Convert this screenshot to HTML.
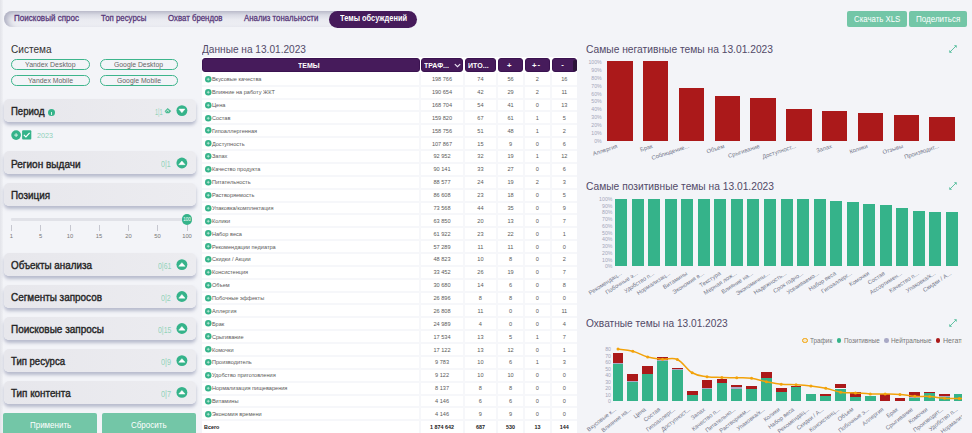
<!DOCTYPE html><html><head><meta charset="utf-8"><style>
*{box-sizing:border-box;margin:0;padding:0}
html,body{width:972px;height:433px;overflow:hidden;background:#f3f4f8;font-family:"Liberation Sans",sans-serif;position:relative}
.ab{position:absolute}
.t{position:absolute;white-space:nowrap;line-height:1}
.panel{position:absolute;left:3.6px;width:192.3px;height:23px;border-radius:5px;background:linear-gradient(90deg,#e7e7ec,#ececf0);box-shadow:0 3px 3.5px rgba(135,140,170,.55)}
.cbtn{position:absolute;width:11px;height:11px;border-radius:50%;background:#35b38a}
.pill{position:absolute;height:10.4px;width:78.6px;border:1.4px solid #3db58c;border-radius:6px}
.gbtn{position:absolute;background:#73c6a7;border-radius:2px}
.hd{position:absolute;top:58.4px;height:14px;background:#461b5b;border-radius:3px;border:0.7px solid #3a1250}
.ic{position:absolute;width:6.5px;height:6.5px;border-radius:50%;background:#35b38a}
.xl{position:absolute;font-size:5.8px;color:#727488;line-height:1;white-space:nowrap;transform-origin:100% 0}
</style></head><body>

<div class="ab" style="left:0;top:0;width:3px;height:433px;background:linear-gradient(90deg,#e2e3e9,#eff0f4)"></div>
<div class="ab" style="left:3.5px;top:10.8px;width:410px;height:16.2px;border-radius:8px;background:linear-gradient(180deg,#bcbdcc 0%,#d9dae4 25%,#eaebf1 55%,#eeeff4 100%);box-shadow:inset 7px 0 6px -4px #a9aabd"></div>
<div class="t" style="transform:scaleX(0.8939);transform-origin:0 0;left:14.00px;top:14.35px;font-size:9px;font-weight:400;color:#573779;-webkit-text-stroke:0.3px #573779;">Поисковый спрос</div>
<div class="t" style="transform:scaleX(0.8701);transform-origin:0 0;left:100.60px;top:14.35px;font-size:9px;font-weight:400;color:#573779;-webkit-text-stroke:0.3px #573779;">Топ ресурсы</div>
<div class="t" style="transform:scaleX(0.8694);transform-origin:0 0;left:167.50px;top:14.35px;font-size:9px;font-weight:400;color:#573779;-webkit-text-stroke:0.3px #573779;">Охват брендов</div>
<div class="t" style="transform:scaleX(0.8689);transform-origin:0 0;left:243.75px;top:14.35px;font-size:9px;font-weight:400;color:#573779;-webkit-text-stroke:0.3px #573779;">Анализ тональности</div>
<div class="ab" style="left:329.4px;top:10.8px;width:87.6px;height:17.2px;border-radius:8.6px;background:#461b5b"></div>
<div class="t" style="transform:scaleX(0.8059);transform-origin:0 0;left:339.50px;top:14.38px;font-size:9.2px;font-weight:700;color:#fff;">Темы обсуждений</div>
<div class="gbtn" style="left:847px;top:10.5px;width:59.75px;height:16.25px"></div>
<div class="t" style="transform:scaleX(0.8884);transform-origin:0 0;left:854.00px;top:15.42px;font-size:8.8px;font-weight:400;color:#fff;">Скачать XLS</div>
<div class="gbtn" style="left:909px;top:10.5px;width:58px;height:16.25px"></div>
<div class="t" style="transform:scaleX(0.9109);transform-origin:0 0;left:916.00px;top:15.42px;font-size:8.8px;font-weight:400;color:#fff;">Поделиться</div>
<div class="t" style="transform:scaleX(0.9337);transform-origin:0 0;left:11.40px;top:44.12px;font-size:10.8px;font-weight:400;color:#333;">Система</div>
<div class="pill" style="left:11.4px;top:59.2px"></div>
<div class="t" style="transform:scaleX(0.9171);transform-origin:0 0;left:25.40px;top:61.34px;font-size:7.6px;font-weight:400;color:#666;">Yandex Desktop</div>
<div class="pill" style="left:99.5px;top:59.2px"></div>
<div class="t" style="transform:scaleX(0.8996);transform-origin:0 0;left:114.30px;top:61.34px;font-size:7.6px;font-weight:400;color:#666;">Google Desktop</div>
<div class="pill" style="left:11.4px;top:75.2px"></div>
<div class="t" style="transform:scaleX(0.9059);transform-origin:0 0;left:28.20px;top:77.34px;font-size:7.6px;font-weight:400;color:#666;">Yandex Mobile</div>
<div class="pill" style="left:99.5px;top:75.2px"></div>
<div class="t" style="transform:scaleX(0.8985);transform-origin:0 0;left:116.80px;top:77.34px;font-size:7.6px;font-weight:400;color:#666;">Google Mobile</div>
<div class="panel" style="top:98.7px"></div>
<div class="t" style="transform:scaleX(0.8845);transform-origin:0 0;left:11.40px;top:106.12px;font-size:10.8px;font-weight:400;color:#262626;-webkit-text-stroke:0.4px #262626;">Период</div>
<svg class="ab" style="left:170px;top:98px" width="25" height="24" viewBox="0 0 25 24"><circle cx="11.9" cy="12.60" r="5.45" fill="#35b38a"/><polygon points="8.90,11.10 14.90,11.10 11.90,14.70" fill="#fff" stroke="#fff" stroke-width="0.5" stroke-linejoin="round"/></svg>
<div class="t" style="transform:scaleX(0.6358);transform-origin:0 0;left:154.80px;top:107.89px;font-size:8.6px;font-weight:400;color:#92d3ba;">1|1</div>
<svg class="ab" style="left:164.4px;top:107.30px" width="8" height="7" viewBox="0 0 8 7"><path d="M0.6 4.3 L3.6 1.0 L7.2 4.1 L5.2 6.2 L2.2 6.2Z" fill="#4dbb94"/><path d="M2.2 4.6 L3.6 3.2 L5 4.5" stroke="#eef6f2" stroke-width="0.9" fill="none"/></svg>
<div class="panel" style="top:151.1px"></div>
<div class="t" style="transform:scaleX(0.9294);transform-origin:0 0;left:11.40px;top:158.52px;font-size:10.8px;font-weight:400;color:#262626;-webkit-text-stroke:0.4px #262626;">Регион выдачи</div>
<svg class="ab" style="left:170px;top:151px" width="25" height="24" viewBox="0 0 25 24"><circle cx="11.9" cy="12.00" r="5.45" fill="#35b38a"/><polygon points="8.75,13.65 15.05,13.65 11.90,10.05" fill="#fff" stroke="#fff" stroke-width="0.5" stroke-linejoin="round"/></svg>
<div class="t" style="transform:scaleX(0.8138);transform-origin:0 0;left:161.40px;top:160.29px;font-size:8.6px;font-weight:400;color:#92d3ba;">0|1</div>
<div class="panel" style="top:183.0px"></div>
<div class="t" style="transform:scaleX(0.9136);transform-origin:0 0;left:11.40px;top:190.42px;font-size:10.8px;font-weight:400;color:#262626;-webkit-text-stroke:0.4px #262626;">Позиция</div>
<div class="panel" style="top:252.7px"></div>
<div class="t" style="transform:scaleX(0.9111);transform-origin:0 0;left:11.40px;top:260.12px;font-size:10.8px;font-weight:400;color:#262626;-webkit-text-stroke:0.4px #262626;">Объекты анализа</div>
<svg class="ab" style="left:170px;top:252px" width="25" height="24" viewBox="0 0 25 24"><circle cx="11.9" cy="12.60" r="5.45" fill="#35b38a"/><polygon points="8.75,14.25 15.05,14.25 11.90,10.65" fill="#fff" stroke="#fff" stroke-width="0.5" stroke-linejoin="round"/></svg>
<div class="t" style="transform:scaleX(0.8023);transform-origin:0 0;left:157.70px;top:261.89px;font-size:8.6px;font-weight:400;color:#92d3ba;">0|61</div>
<div class="panel" style="top:284.6px"></div>
<div class="t" style="transform:scaleX(0.9199);transform-origin:0 0;left:11.40px;top:292.02px;font-size:10.8px;font-weight:400;color:#262626;-webkit-text-stroke:0.4px #262626;">Сегменты запросов</div>
<svg class="ab" style="left:170px;top:284px" width="25" height="24" viewBox="0 0 25 24"><circle cx="11.9" cy="12.50" r="5.45" fill="#35b38a"/><polygon points="8.75,14.15 15.05,14.15 11.90,10.55" fill="#fff" stroke="#fff" stroke-width="0.5" stroke-linejoin="round"/></svg>
<div class="t" style="transform:scaleX(0.8223);transform-origin:0 0;left:161.30px;top:293.79px;font-size:8.6px;font-weight:400;color:#92d3ba;">0|2</div>
<div class="panel" style="top:316.6px"></div>
<div class="t" style="transform:scaleX(0.9252);transform-origin:0 0;left:11.40px;top:324.02px;font-size:10.8px;font-weight:400;color:#262626;-webkit-text-stroke:0.4px #262626;">Поисковые запросы</div>
<svg class="ab" style="left:170px;top:316px" width="25" height="24" viewBox="0 0 25 24"><circle cx="11.9" cy="12.50" r="5.45" fill="#35b38a"/><polygon points="8.75,14.15 15.05,14.15 11.90,10.55" fill="#fff" stroke="#fff" stroke-width="0.5" stroke-linejoin="round"/></svg>
<div class="t" style="transform:scaleX(0.8023);transform-origin:0 0;left:157.70px;top:325.79px;font-size:8.6px;font-weight:400;color:#92d3ba;">0|15</div>
<div class="panel" style="top:348.7px"></div>
<div class="t" style="transform:scaleX(0.8839);transform-origin:0 0;left:11.40px;top:356.12px;font-size:10.8px;font-weight:400;color:#262626;-webkit-text-stroke:0.4px #262626;">Тип ресурса</div>
<svg class="ab" style="left:170px;top:348px" width="25" height="24" viewBox="0 0 25 24"><circle cx="11.9" cy="12.60" r="5.45" fill="#35b38a"/><polygon points="8.75,14.25 15.05,14.25 11.90,10.65" fill="#fff" stroke="#fff" stroke-width="0.5" stroke-linejoin="round"/></svg>
<div class="t" style="transform:scaleX(0.8477);transform-origin:0 0;left:161.00px;top:357.89px;font-size:8.6px;font-weight:400;color:#92d3ba;">0|9</div>
<div class="panel" style="top:380.5px"></div>
<div class="t" style="transform:scaleX(0.9123);transform-origin:0 0;left:11.40px;top:387.92px;font-size:10.8px;font-weight:400;color:#262626;-webkit-text-stroke:0.4px #262626;">Тип контента</div>
<svg class="ab" style="left:170px;top:380px" width="25" height="24" viewBox="0 0 25 24"><circle cx="11.9" cy="12.40" r="5.45" fill="#35b38a"/><polygon points="8.75,14.05 15.05,14.05 11.90,10.45" fill="#fff" stroke="#fff" stroke-width="0.5" stroke-linejoin="round"/></svg>
<div class="t" style="transform:scaleX(0.8477);transform-origin:0 0;left:161.00px;top:389.69px;font-size:8.6px;font-weight:400;color:#92d3ba;">0|7</div>
<div class="ab" style="left:48.1px;top:109.4px;width:7px;height:7px;border-radius:50%;background:#35b38a"></div>
<div class="ab" style="left:51.1px;top:112px;width:1px;height:3px;background:#d8f0e6"></div>
<svg class="ab" style="left:10.5px;top:129.8px" width="22" height="11" viewBox="0 0 22 11"><circle cx="5.1" cy="5.1" r="4.85" fill="#35b38a"/><path d="M3.2 5.1 H7 M5.1 3.2 V7" stroke="#d5f1e6" stroke-width="1"/><rect x="11.1" y="0.2" width="9.2" height="9.4" rx="1" fill="#35b38a"/><path d="M12.8 4.9 L14.9 7 L18.6 2.9" stroke="#fff" stroke-width="1.2" fill="none"/></svg>
<div class="t" style="transform:scaleX(1.0000);transform-origin:0 0;left:37.00px;top:131.98px;font-size:7.2px;font-weight:400;color:#8fd0b8;">2023</div>
<div class="ab" style="left:11.4px;top:218.4px;width:176px;height:2.3px;border-radius:1px;background:#e1e2e8"></div>
<div class="ab" style="left:10.9px;top:224.8px;width:1px;height:6px;background:#c6c7d0"></div>
<div class="t" style="left:-3.60px;width:30px;text-align:center;top:233.97px;font-size:5.8px;font-weight:400;color:#777;">1</div>
<div class="ab" style="left:40.1px;top:224.8px;width:1px;height:6px;background:#c6c7d0"></div>
<div class="t" style="left:25.60px;width:30px;text-align:center;top:233.97px;font-size:5.8px;font-weight:400;color:#777;">5</div>
<div class="ab" style="left:69.5px;top:224.8px;width:1px;height:6px;background:#c6c7d0"></div>
<div class="t" style="left:55.00px;width:30px;text-align:center;top:233.97px;font-size:5.8px;font-weight:400;color:#777;">10</div>
<div class="ab" style="left:98.5px;top:224.8px;width:1px;height:6px;background:#c6c7d0"></div>
<div class="t" style="left:84.00px;width:30px;text-align:center;top:233.97px;font-size:5.8px;font-weight:400;color:#777;">15</div>
<div class="ab" style="left:128.0px;top:224.8px;width:1px;height:6px;background:#c6c7d0"></div>
<div class="t" style="left:113.50px;width:30px;text-align:center;top:233.97px;font-size:5.8px;font-weight:400;color:#777;">20</div>
<div class="ab" style="left:157.0px;top:224.8px;width:1px;height:6px;background:#c6c7d0"></div>
<div class="t" style="left:142.50px;width:30px;text-align:center;top:233.97px;font-size:5.8px;font-weight:400;color:#777;">50</div>
<div class="ab" style="left:186.5px;top:224.8px;width:1px;height:6px;background:#c6c7d0"></div>
<div class="t" style="left:172.00px;width:30px;text-align:center;top:233.97px;font-size:5.8px;font-weight:400;color:#777;">100</div>
<div class="ab" style="left:181.6px;top:214px;width:10.8px;height:10.8px;border-radius:50%;background:#35b38a"></div>
<div class="t" style="left:181.00px;width:12px;text-align:center;top:218.19px;font-size:4.6px;font-weight:400;color:#fff;">100</div>
<div class="gbtn" style="left:3.1px;top:412.8px;width:94px;height:24px"></div>
<div class="t" style="transform:scaleX(0.8857);transform-origin:0 0;left:29.80px;top:421.25px;font-size:9px;font-weight:400;color:#fff;">Применить</div>
<div class="gbtn" style="left:101.9px;top:412.8px;width:94px;height:24px"></div>
<div class="t" style="transform:scaleX(0.8897);transform-origin:0 0;left:130.70px;top:421.25px;font-size:9px;font-weight:400;color:#fff;">Сбросить</div>
<div class="t" style="transform:scaleX(0.9547);transform-origin:0 0;left:201.50px;top:43.99px;font-size:10.6px;font-weight:400;color:#524a68;">Данные на 13.01.2023</div>
<div class="ab" style="left:201.5px;top:56.5px;width:375.8px;height:380px;background:#f6f7fa"></div>
<div class="ab" style="left:201.5px;top:56.5px;width:375.8px;height:16px;background:#fff"></div>
<div class="hd" style="left:202px;width:217.5px"></div>
<div class="hd" style="left:421px;width:42px"></div>
<div class="hd" style="left:464.8px;width:31.19999999999999px"></div>
<div class="hd" style="left:498px;width:25px"></div>
<div class="hd" style="left:525px;width:25px"></div>
<div class="hd" style="left:552px;width:25px"></div>
<div class="t" style="transform:scaleX(0.9027);transform-origin:0 0;left:298.25px;top:61.77px;font-size:7.8px;font-weight:700;color:#fff;">ТЕМЫ</div>
<div class="t" style="transform:scaleX(0.8933);transform-origin:0 0;left:424.00px;top:61.77px;font-size:7.8px;font-weight:700;color:#fff;">ТРАФ...</div>
<svg class="ab" style="left:453.5px;top:63px" width="7" height="5" viewBox="0 0 7 5"><path d="M0.8 1.1 L3.5 3.7 L6.2 1.1" stroke="#efe8f6" stroke-width="1.1" fill="none"/></svg>
<div class="t" style="transform:scaleX(0.9055);transform-origin:0 0;left:467.60px;top:61.77px;font-size:7.8px;font-weight:700;color:#fff;">ИТО...</div>
<div class="t" style="left:499.20px;width:20px;text-align:center;top:61.87px;font-size:7.8px;font-weight:700;color:#fff;">+</div>
<div class="t" style="left:524.20px;width:20px;text-align:center;top:61.87px;font-size:7.8px;font-weight:700;color:#fff;">+</div>
<div class="t" style="left:528.90px;width:20px;text-align:center;top:61.17px;font-size:7.8px;font-weight:700;color:#fff;">-</div>
<div class="t" style="left:552.60px;width:20px;text-align:center;top:61.17px;font-size:7.8px;font-weight:700;color:#fff;">-</div>
<div class="ab" style="left:573.4px;top:59.6px;width:3.2px;height:11.5px;background:#2b1338;border-radius:1.5px"></div>
<div class="ab" style="left:202px;top:72.50px;width:217.20px;height:12.20px;background:#fff"></div>
<div class="ab" style="left:421.2px;top:72.50px;width:41.50px;height:12.20px;background:#fff"></div>
<div class="ab" style="left:464.7px;top:72.50px;width:31.70px;height:12.20px;background:#fff"></div>
<div class="ab" style="left:498.4px;top:72.50px;width:24.90px;height:12.20px;background:#fff"></div>
<div class="ab" style="left:525.3px;top:72.50px;width:24.30px;height:12.20px;background:#fff"></div>
<div class="ab" style="left:551.6px;top:72.50px;width:25.70px;height:12.20px;background:#fff"></div>
<svg class="ab" style="left:204.8px;top:75.95px" width="7" height="7" viewBox="0 0 7 7"><circle cx="3.25" cy="3.25" r="3.25" fill="#35b38a"/><path d="M1.8 3.25 H4.7 M3.25 1.8 V4.7" stroke="#c9eede" stroke-width="0.8"/></svg>
<div class="t" style="left:211.90px;top:77.24px;font-size:5.6px;font-weight:400;color:#5a5a5a;">Вкусовые качества</div>
<div class="t" style="left:422.00px;width:40px;text-align:center;top:77.24px;font-size:5.6px;font-weight:400;color:#5a5a5a;">198 766</div>
<div class="t" style="left:460.40px;width:40px;text-align:center;top:77.24px;font-size:5.6px;font-weight:400;color:#5a5a5a;">74</div>
<div class="t" style="left:490.50px;width:40px;text-align:center;top:77.24px;font-size:5.6px;font-weight:400;color:#5a5a5a;">56</div>
<div class="t" style="left:517.40px;width:40px;text-align:center;top:77.24px;font-size:5.6px;font-weight:400;color:#5a5a5a;">2</div>
<div class="t" style="left:544.30px;width:40px;text-align:center;top:77.24px;font-size:5.6px;font-weight:400;color:#5a5a5a;">16</div>
<div class="ab" style="left:202px;top:86.70px;width:217.20px;height:10.87px;background:#fff"></div>
<div class="ab" style="left:421.2px;top:86.70px;width:41.50px;height:10.87px;background:#fff"></div>
<div class="ab" style="left:464.7px;top:86.70px;width:31.70px;height:10.87px;background:#fff"></div>
<div class="ab" style="left:498.4px;top:86.70px;width:24.90px;height:10.87px;background:#fff"></div>
<div class="ab" style="left:525.3px;top:86.70px;width:24.30px;height:10.87px;background:#fff"></div>
<div class="ab" style="left:551.6px;top:86.70px;width:25.70px;height:10.87px;background:#fff"></div>
<svg class="ab" style="left:204.8px;top:88.82px" width="7" height="7" viewBox="0 0 7 7"><circle cx="3.25" cy="3.25" r="3.25" fill="#35b38a"/><path d="M1.8 3.25 H4.7 M3.25 1.8 V4.7" stroke="#c9eede" stroke-width="0.8"/></svg>
<div class="t" style="left:211.90px;top:90.11px;font-size:5.6px;font-weight:400;color:#5a5a5a;">Влияние на работу ЖКТ</div>
<div class="t" style="left:422.00px;width:40px;text-align:center;top:90.11px;font-size:5.6px;font-weight:400;color:#5a5a5a;">190 654</div>
<div class="t" style="left:460.40px;width:40px;text-align:center;top:90.11px;font-size:5.6px;font-weight:400;color:#5a5a5a;">42</div>
<div class="t" style="left:490.50px;width:40px;text-align:center;top:90.11px;font-size:5.6px;font-weight:400;color:#5a5a5a;">29</div>
<div class="t" style="left:517.40px;width:40px;text-align:center;top:90.11px;font-size:5.6px;font-weight:400;color:#5a5a5a;">2</div>
<div class="t" style="left:544.30px;width:40px;text-align:center;top:90.11px;font-size:5.6px;font-weight:400;color:#5a5a5a;">11</div>
<div class="ab" style="left:202px;top:99.57px;width:217.20px;height:10.87px;background:#fff"></div>
<div class="ab" style="left:421.2px;top:99.57px;width:41.50px;height:10.87px;background:#fff"></div>
<div class="ab" style="left:464.7px;top:99.57px;width:31.70px;height:10.87px;background:#fff"></div>
<div class="ab" style="left:498.4px;top:99.57px;width:24.90px;height:10.87px;background:#fff"></div>
<div class="ab" style="left:525.3px;top:99.57px;width:24.30px;height:10.87px;background:#fff"></div>
<div class="ab" style="left:551.6px;top:99.57px;width:25.70px;height:10.87px;background:#fff"></div>
<svg class="ab" style="left:204.8px;top:101.69px" width="7" height="7" viewBox="0 0 7 7"><circle cx="3.25" cy="3.25" r="3.25" fill="#35b38a"/><path d="M1.8 3.25 H4.7 M3.25 1.8 V4.7" stroke="#c9eede" stroke-width="0.8"/></svg>
<div class="t" style="left:211.90px;top:102.98px;font-size:5.6px;font-weight:400;color:#5a5a5a;">Цена</div>
<div class="t" style="left:422.00px;width:40px;text-align:center;top:102.98px;font-size:5.6px;font-weight:400;color:#5a5a5a;">168 704</div>
<div class="t" style="left:460.40px;width:40px;text-align:center;top:102.98px;font-size:5.6px;font-weight:400;color:#5a5a5a;">54</div>
<div class="t" style="left:490.50px;width:40px;text-align:center;top:102.98px;font-size:5.6px;font-weight:400;color:#5a5a5a;">41</div>
<div class="t" style="left:517.40px;width:40px;text-align:center;top:102.98px;font-size:5.6px;font-weight:400;color:#5a5a5a;">0</div>
<div class="t" style="left:544.30px;width:40px;text-align:center;top:102.98px;font-size:5.6px;font-weight:400;color:#5a5a5a;">13</div>
<div class="ab" style="left:202px;top:112.44px;width:217.20px;height:10.87px;background:#fff"></div>
<div class="ab" style="left:421.2px;top:112.44px;width:41.50px;height:10.87px;background:#fff"></div>
<div class="ab" style="left:464.7px;top:112.44px;width:31.70px;height:10.87px;background:#fff"></div>
<div class="ab" style="left:498.4px;top:112.44px;width:24.90px;height:10.87px;background:#fff"></div>
<div class="ab" style="left:525.3px;top:112.44px;width:24.30px;height:10.87px;background:#fff"></div>
<div class="ab" style="left:551.6px;top:112.44px;width:25.70px;height:10.87px;background:#fff"></div>
<svg class="ab" style="left:204.8px;top:114.56px" width="7" height="7" viewBox="0 0 7 7"><circle cx="3.25" cy="3.25" r="3.25" fill="#35b38a"/><path d="M1.8 3.25 H4.7 M3.25 1.8 V4.7" stroke="#c9eede" stroke-width="0.8"/></svg>
<div class="t" style="left:211.90px;top:115.85px;font-size:5.6px;font-weight:400;color:#5a5a5a;">Состав</div>
<div class="t" style="left:422.00px;width:40px;text-align:center;top:115.85px;font-size:5.6px;font-weight:400;color:#5a5a5a;">159 820</div>
<div class="t" style="left:460.40px;width:40px;text-align:center;top:115.85px;font-size:5.6px;font-weight:400;color:#5a5a5a;">67</div>
<div class="t" style="left:490.50px;width:40px;text-align:center;top:115.85px;font-size:5.6px;font-weight:400;color:#5a5a5a;">61</div>
<div class="t" style="left:517.40px;width:40px;text-align:center;top:115.85px;font-size:5.6px;font-weight:400;color:#5a5a5a;">1</div>
<div class="t" style="left:544.30px;width:40px;text-align:center;top:115.85px;font-size:5.6px;font-weight:400;color:#5a5a5a;">5</div>
<div class="ab" style="left:202px;top:125.31px;width:217.20px;height:10.87px;background:#fff"></div>
<div class="ab" style="left:421.2px;top:125.31px;width:41.50px;height:10.87px;background:#fff"></div>
<div class="ab" style="left:464.7px;top:125.31px;width:31.70px;height:10.87px;background:#fff"></div>
<div class="ab" style="left:498.4px;top:125.31px;width:24.90px;height:10.87px;background:#fff"></div>
<div class="ab" style="left:525.3px;top:125.31px;width:24.30px;height:10.87px;background:#fff"></div>
<div class="ab" style="left:551.6px;top:125.31px;width:25.70px;height:10.87px;background:#fff"></div>
<svg class="ab" style="left:204.8px;top:127.43px" width="7" height="7" viewBox="0 0 7 7"><circle cx="3.25" cy="3.25" r="3.25" fill="#35b38a"/><path d="M1.8 3.25 H4.7 M3.25 1.8 V4.7" stroke="#c9eede" stroke-width="0.8"/></svg>
<div class="t" style="left:211.90px;top:128.72px;font-size:5.6px;font-weight:400;color:#5a5a5a;">Гипоаллергенная</div>
<div class="t" style="left:422.00px;width:40px;text-align:center;top:128.72px;font-size:5.6px;font-weight:400;color:#5a5a5a;">158 756</div>
<div class="t" style="left:460.40px;width:40px;text-align:center;top:128.72px;font-size:5.6px;font-weight:400;color:#5a5a5a;">51</div>
<div class="t" style="left:490.50px;width:40px;text-align:center;top:128.72px;font-size:5.6px;font-weight:400;color:#5a5a5a;">48</div>
<div class="t" style="left:517.40px;width:40px;text-align:center;top:128.72px;font-size:5.6px;font-weight:400;color:#5a5a5a;">1</div>
<div class="t" style="left:544.30px;width:40px;text-align:center;top:128.72px;font-size:5.6px;font-weight:400;color:#5a5a5a;">2</div>
<div class="ab" style="left:202px;top:138.18px;width:217.20px;height:10.87px;background:#fff"></div>
<div class="ab" style="left:421.2px;top:138.18px;width:41.50px;height:10.87px;background:#fff"></div>
<div class="ab" style="left:464.7px;top:138.18px;width:31.70px;height:10.87px;background:#fff"></div>
<div class="ab" style="left:498.4px;top:138.18px;width:24.90px;height:10.87px;background:#fff"></div>
<div class="ab" style="left:525.3px;top:138.18px;width:24.30px;height:10.87px;background:#fff"></div>
<div class="ab" style="left:551.6px;top:138.18px;width:25.70px;height:10.87px;background:#fff"></div>
<svg class="ab" style="left:204.8px;top:140.30px" width="7" height="7" viewBox="0 0 7 7"><circle cx="3.25" cy="3.25" r="3.25" fill="#35b38a"/><path d="M1.8 3.25 H4.7 M3.25 1.8 V4.7" stroke="#c9eede" stroke-width="0.8"/></svg>
<div class="t" style="left:211.90px;top:141.59px;font-size:5.6px;font-weight:400;color:#5a5a5a;">Доступность</div>
<div class="t" style="left:422.00px;width:40px;text-align:center;top:141.59px;font-size:5.6px;font-weight:400;color:#5a5a5a;">107 867</div>
<div class="t" style="left:460.40px;width:40px;text-align:center;top:141.59px;font-size:5.6px;font-weight:400;color:#5a5a5a;">15</div>
<div class="t" style="left:490.50px;width:40px;text-align:center;top:141.59px;font-size:5.6px;font-weight:400;color:#5a5a5a;">9</div>
<div class="t" style="left:517.40px;width:40px;text-align:center;top:141.59px;font-size:5.6px;font-weight:400;color:#5a5a5a;">0</div>
<div class="t" style="left:544.30px;width:40px;text-align:center;top:141.59px;font-size:5.6px;font-weight:400;color:#5a5a5a;">6</div>
<div class="ab" style="left:202px;top:151.05px;width:217.20px;height:10.87px;background:#fff"></div>
<div class="ab" style="left:421.2px;top:151.05px;width:41.50px;height:10.87px;background:#fff"></div>
<div class="ab" style="left:464.7px;top:151.05px;width:31.70px;height:10.87px;background:#fff"></div>
<div class="ab" style="left:498.4px;top:151.05px;width:24.90px;height:10.87px;background:#fff"></div>
<div class="ab" style="left:525.3px;top:151.05px;width:24.30px;height:10.87px;background:#fff"></div>
<div class="ab" style="left:551.6px;top:151.05px;width:25.70px;height:10.87px;background:#fff"></div>
<svg class="ab" style="left:204.8px;top:153.17px" width="7" height="7" viewBox="0 0 7 7"><circle cx="3.25" cy="3.25" r="3.25" fill="#35b38a"/><path d="M1.8 3.25 H4.7 M3.25 1.8 V4.7" stroke="#c9eede" stroke-width="0.8"/></svg>
<div class="t" style="left:211.90px;top:154.46px;font-size:5.6px;font-weight:400;color:#5a5a5a;">Запах</div>
<div class="t" style="left:422.00px;width:40px;text-align:center;top:154.46px;font-size:5.6px;font-weight:400;color:#5a5a5a;">92 952</div>
<div class="t" style="left:460.40px;width:40px;text-align:center;top:154.46px;font-size:5.6px;font-weight:400;color:#5a5a5a;">32</div>
<div class="t" style="left:490.50px;width:40px;text-align:center;top:154.46px;font-size:5.6px;font-weight:400;color:#5a5a5a;">19</div>
<div class="t" style="left:517.40px;width:40px;text-align:center;top:154.46px;font-size:5.6px;font-weight:400;color:#5a5a5a;">1</div>
<div class="t" style="left:544.30px;width:40px;text-align:center;top:154.46px;font-size:5.6px;font-weight:400;color:#5a5a5a;">12</div>
<div class="ab" style="left:202px;top:163.92px;width:217.20px;height:10.87px;background:#fff"></div>
<div class="ab" style="left:421.2px;top:163.92px;width:41.50px;height:10.87px;background:#fff"></div>
<div class="ab" style="left:464.7px;top:163.92px;width:31.70px;height:10.87px;background:#fff"></div>
<div class="ab" style="left:498.4px;top:163.92px;width:24.90px;height:10.87px;background:#fff"></div>
<div class="ab" style="left:525.3px;top:163.92px;width:24.30px;height:10.87px;background:#fff"></div>
<div class="ab" style="left:551.6px;top:163.92px;width:25.70px;height:10.87px;background:#fff"></div>
<svg class="ab" style="left:204.8px;top:166.04px" width="7" height="7" viewBox="0 0 7 7"><circle cx="3.25" cy="3.25" r="3.25" fill="#35b38a"/><path d="M1.8 3.25 H4.7 M3.25 1.8 V4.7" stroke="#c9eede" stroke-width="0.8"/></svg>
<div class="t" style="left:211.90px;top:167.33px;font-size:5.6px;font-weight:400;color:#5a5a5a;">Качество продукта</div>
<div class="t" style="left:422.00px;width:40px;text-align:center;top:167.33px;font-size:5.6px;font-weight:400;color:#5a5a5a;">90 141</div>
<div class="t" style="left:460.40px;width:40px;text-align:center;top:167.33px;font-size:5.6px;font-weight:400;color:#5a5a5a;">33</div>
<div class="t" style="left:490.50px;width:40px;text-align:center;top:167.33px;font-size:5.6px;font-weight:400;color:#5a5a5a;">27</div>
<div class="t" style="left:517.40px;width:40px;text-align:center;top:167.33px;font-size:5.6px;font-weight:400;color:#5a5a5a;">0</div>
<div class="t" style="left:544.30px;width:40px;text-align:center;top:167.33px;font-size:5.6px;font-weight:400;color:#5a5a5a;">6</div>
<div class="ab" style="left:202px;top:176.79px;width:217.20px;height:10.87px;background:#fff"></div>
<div class="ab" style="left:421.2px;top:176.79px;width:41.50px;height:10.87px;background:#fff"></div>
<div class="ab" style="left:464.7px;top:176.79px;width:31.70px;height:10.87px;background:#fff"></div>
<div class="ab" style="left:498.4px;top:176.79px;width:24.90px;height:10.87px;background:#fff"></div>
<div class="ab" style="left:525.3px;top:176.79px;width:24.30px;height:10.87px;background:#fff"></div>
<div class="ab" style="left:551.6px;top:176.79px;width:25.70px;height:10.87px;background:#fff"></div>
<svg class="ab" style="left:204.8px;top:178.91px" width="7" height="7" viewBox="0 0 7 7"><circle cx="3.25" cy="3.25" r="3.25" fill="#35b38a"/><path d="M1.8 3.25 H4.7 M3.25 1.8 V4.7" stroke="#c9eede" stroke-width="0.8"/></svg>
<div class="t" style="left:211.90px;top:180.20px;font-size:5.6px;font-weight:400;color:#5a5a5a;">Питательность</div>
<div class="t" style="left:422.00px;width:40px;text-align:center;top:180.20px;font-size:5.6px;font-weight:400;color:#5a5a5a;">88 577</div>
<div class="t" style="left:460.40px;width:40px;text-align:center;top:180.20px;font-size:5.6px;font-weight:400;color:#5a5a5a;">24</div>
<div class="t" style="left:490.50px;width:40px;text-align:center;top:180.20px;font-size:5.6px;font-weight:400;color:#5a5a5a;">19</div>
<div class="t" style="left:517.40px;width:40px;text-align:center;top:180.20px;font-size:5.6px;font-weight:400;color:#5a5a5a;">2</div>
<div class="t" style="left:544.30px;width:40px;text-align:center;top:180.20px;font-size:5.6px;font-weight:400;color:#5a5a5a;">3</div>
<div class="ab" style="left:202px;top:189.66px;width:217.20px;height:10.87px;background:#fff"></div>
<div class="ab" style="left:421.2px;top:189.66px;width:41.50px;height:10.87px;background:#fff"></div>
<div class="ab" style="left:464.7px;top:189.66px;width:31.70px;height:10.87px;background:#fff"></div>
<div class="ab" style="left:498.4px;top:189.66px;width:24.90px;height:10.87px;background:#fff"></div>
<div class="ab" style="left:525.3px;top:189.66px;width:24.30px;height:10.87px;background:#fff"></div>
<div class="ab" style="left:551.6px;top:189.66px;width:25.70px;height:10.87px;background:#fff"></div>
<svg class="ab" style="left:204.8px;top:191.78px" width="7" height="7" viewBox="0 0 7 7"><circle cx="3.25" cy="3.25" r="3.25" fill="#35b38a"/><path d="M1.8 3.25 H4.7 M3.25 1.8 V4.7" stroke="#c9eede" stroke-width="0.8"/></svg>
<div class="t" style="left:211.90px;top:193.07px;font-size:5.6px;font-weight:400;color:#5a5a5a;">Растворяемость</div>
<div class="t" style="left:422.00px;width:40px;text-align:center;top:193.07px;font-size:5.6px;font-weight:400;color:#5a5a5a;">86 608</div>
<div class="t" style="left:460.40px;width:40px;text-align:center;top:193.07px;font-size:5.6px;font-weight:400;color:#5a5a5a;">23</div>
<div class="t" style="left:490.50px;width:40px;text-align:center;top:193.07px;font-size:5.6px;font-weight:400;color:#5a5a5a;">18</div>
<div class="t" style="left:517.40px;width:40px;text-align:center;top:193.07px;font-size:5.6px;font-weight:400;color:#5a5a5a;">0</div>
<div class="t" style="left:544.30px;width:40px;text-align:center;top:193.07px;font-size:5.6px;font-weight:400;color:#5a5a5a;">5</div>
<div class="ab" style="left:202px;top:202.53px;width:217.20px;height:10.87px;background:#fff"></div>
<div class="ab" style="left:421.2px;top:202.53px;width:41.50px;height:10.87px;background:#fff"></div>
<div class="ab" style="left:464.7px;top:202.53px;width:31.70px;height:10.87px;background:#fff"></div>
<div class="ab" style="left:498.4px;top:202.53px;width:24.90px;height:10.87px;background:#fff"></div>
<div class="ab" style="left:525.3px;top:202.53px;width:24.30px;height:10.87px;background:#fff"></div>
<div class="ab" style="left:551.6px;top:202.53px;width:25.70px;height:10.87px;background:#fff"></div>
<svg class="ab" style="left:204.8px;top:204.65px" width="7" height="7" viewBox="0 0 7 7"><circle cx="3.25" cy="3.25" r="3.25" fill="#35b38a"/><path d="M1.8 3.25 H4.7 M3.25 1.8 V4.7" stroke="#c9eede" stroke-width="0.8"/></svg>
<div class="t" style="left:211.90px;top:205.94px;font-size:5.6px;font-weight:400;color:#5a5a5a;">Упаковка/комплектация</div>
<div class="t" style="left:422.00px;width:40px;text-align:center;top:205.94px;font-size:5.6px;font-weight:400;color:#5a5a5a;">73 568</div>
<div class="t" style="left:460.40px;width:40px;text-align:center;top:205.94px;font-size:5.6px;font-weight:400;color:#5a5a5a;">44</div>
<div class="t" style="left:490.50px;width:40px;text-align:center;top:205.94px;font-size:5.6px;font-weight:400;color:#5a5a5a;">35</div>
<div class="t" style="left:517.40px;width:40px;text-align:center;top:205.94px;font-size:5.6px;font-weight:400;color:#5a5a5a;">0</div>
<div class="t" style="left:544.30px;width:40px;text-align:center;top:205.94px;font-size:5.6px;font-weight:400;color:#5a5a5a;">9</div>
<div class="ab" style="left:202px;top:215.40px;width:217.20px;height:10.87px;background:#fff"></div>
<div class="ab" style="left:421.2px;top:215.40px;width:41.50px;height:10.87px;background:#fff"></div>
<div class="ab" style="left:464.7px;top:215.40px;width:31.70px;height:10.87px;background:#fff"></div>
<div class="ab" style="left:498.4px;top:215.40px;width:24.90px;height:10.87px;background:#fff"></div>
<div class="ab" style="left:525.3px;top:215.40px;width:24.30px;height:10.87px;background:#fff"></div>
<div class="ab" style="left:551.6px;top:215.40px;width:25.70px;height:10.87px;background:#fff"></div>
<svg class="ab" style="left:204.8px;top:217.52px" width="7" height="7" viewBox="0 0 7 7"><circle cx="3.25" cy="3.25" r="3.25" fill="#35b38a"/><path d="M1.8 3.25 H4.7 M3.25 1.8 V4.7" stroke="#c9eede" stroke-width="0.8"/></svg>
<div class="t" style="left:211.90px;top:218.81px;font-size:5.6px;font-weight:400;color:#5a5a5a;">Колики</div>
<div class="t" style="left:422.00px;width:40px;text-align:center;top:218.81px;font-size:5.6px;font-weight:400;color:#5a5a5a;">63 850</div>
<div class="t" style="left:460.40px;width:40px;text-align:center;top:218.81px;font-size:5.6px;font-weight:400;color:#5a5a5a;">20</div>
<div class="t" style="left:490.50px;width:40px;text-align:center;top:218.81px;font-size:5.6px;font-weight:400;color:#5a5a5a;">13</div>
<div class="t" style="left:517.40px;width:40px;text-align:center;top:218.81px;font-size:5.6px;font-weight:400;color:#5a5a5a;">0</div>
<div class="t" style="left:544.30px;width:40px;text-align:center;top:218.81px;font-size:5.6px;font-weight:400;color:#5a5a5a;">7</div>
<div class="ab" style="left:202px;top:228.27px;width:217.20px;height:10.87px;background:#fff"></div>
<div class="ab" style="left:421.2px;top:228.27px;width:41.50px;height:10.87px;background:#fff"></div>
<div class="ab" style="left:464.7px;top:228.27px;width:31.70px;height:10.87px;background:#fff"></div>
<div class="ab" style="left:498.4px;top:228.27px;width:24.90px;height:10.87px;background:#fff"></div>
<div class="ab" style="left:525.3px;top:228.27px;width:24.30px;height:10.87px;background:#fff"></div>
<div class="ab" style="left:551.6px;top:228.27px;width:25.70px;height:10.87px;background:#fff"></div>
<svg class="ab" style="left:204.8px;top:230.39px" width="7" height="7" viewBox="0 0 7 7"><circle cx="3.25" cy="3.25" r="3.25" fill="#35b38a"/><path d="M1.8 3.25 H4.7 M3.25 1.8 V4.7" stroke="#c9eede" stroke-width="0.8"/></svg>
<div class="t" style="left:211.90px;top:231.68px;font-size:5.6px;font-weight:400;color:#5a5a5a;">Набор веса</div>
<div class="t" style="left:422.00px;width:40px;text-align:center;top:231.68px;font-size:5.6px;font-weight:400;color:#5a5a5a;">61 922</div>
<div class="t" style="left:460.40px;width:40px;text-align:center;top:231.68px;font-size:5.6px;font-weight:400;color:#5a5a5a;">23</div>
<div class="t" style="left:490.50px;width:40px;text-align:center;top:231.68px;font-size:5.6px;font-weight:400;color:#5a5a5a;">22</div>
<div class="t" style="left:517.40px;width:40px;text-align:center;top:231.68px;font-size:5.6px;font-weight:400;color:#5a5a5a;">0</div>
<div class="t" style="left:544.30px;width:40px;text-align:center;top:231.68px;font-size:5.6px;font-weight:400;color:#5a5a5a;">1</div>
<div class="ab" style="left:202px;top:241.14px;width:217.20px;height:10.87px;background:#fff"></div>
<div class="ab" style="left:421.2px;top:241.14px;width:41.50px;height:10.87px;background:#fff"></div>
<div class="ab" style="left:464.7px;top:241.14px;width:31.70px;height:10.87px;background:#fff"></div>
<div class="ab" style="left:498.4px;top:241.14px;width:24.90px;height:10.87px;background:#fff"></div>
<div class="ab" style="left:525.3px;top:241.14px;width:24.30px;height:10.87px;background:#fff"></div>
<div class="ab" style="left:551.6px;top:241.14px;width:25.70px;height:10.87px;background:#fff"></div>
<svg class="ab" style="left:204.8px;top:243.26px" width="7" height="7" viewBox="0 0 7 7"><circle cx="3.25" cy="3.25" r="3.25" fill="#35b38a"/><path d="M1.8 3.25 H4.7 M3.25 1.8 V4.7" stroke="#c9eede" stroke-width="0.8"/></svg>
<div class="t" style="left:211.90px;top:244.55px;font-size:5.6px;font-weight:400;color:#5a5a5a;">Рекомендации педиатра</div>
<div class="t" style="left:422.00px;width:40px;text-align:center;top:244.55px;font-size:5.6px;font-weight:400;color:#5a5a5a;">57 289</div>
<div class="t" style="left:460.40px;width:40px;text-align:center;top:244.55px;font-size:5.6px;font-weight:400;color:#5a5a5a;">11</div>
<div class="t" style="left:490.50px;width:40px;text-align:center;top:244.55px;font-size:5.6px;font-weight:400;color:#5a5a5a;">11</div>
<div class="t" style="left:517.40px;width:40px;text-align:center;top:244.55px;font-size:5.6px;font-weight:400;color:#5a5a5a;">0</div>
<div class="t" style="left:544.30px;width:40px;text-align:center;top:244.55px;font-size:5.6px;font-weight:400;color:#5a5a5a;">0</div>
<div class="ab" style="left:202px;top:254.01px;width:217.20px;height:10.87px;background:#fff"></div>
<div class="ab" style="left:421.2px;top:254.01px;width:41.50px;height:10.87px;background:#fff"></div>
<div class="ab" style="left:464.7px;top:254.01px;width:31.70px;height:10.87px;background:#fff"></div>
<div class="ab" style="left:498.4px;top:254.01px;width:24.90px;height:10.87px;background:#fff"></div>
<div class="ab" style="left:525.3px;top:254.01px;width:24.30px;height:10.87px;background:#fff"></div>
<div class="ab" style="left:551.6px;top:254.01px;width:25.70px;height:10.87px;background:#fff"></div>
<svg class="ab" style="left:204.8px;top:256.13px" width="7" height="7" viewBox="0 0 7 7"><circle cx="3.25" cy="3.25" r="3.25" fill="#35b38a"/><path d="M1.8 3.25 H4.7 M3.25 1.8 V4.7" stroke="#c9eede" stroke-width="0.8"/></svg>
<div class="t" style="left:211.90px;top:257.42px;font-size:5.6px;font-weight:400;color:#5a5a5a;">Скидки / Акции</div>
<div class="t" style="left:422.00px;width:40px;text-align:center;top:257.42px;font-size:5.6px;font-weight:400;color:#5a5a5a;">48 823</div>
<div class="t" style="left:460.40px;width:40px;text-align:center;top:257.42px;font-size:5.6px;font-weight:400;color:#5a5a5a;">10</div>
<div class="t" style="left:490.50px;width:40px;text-align:center;top:257.42px;font-size:5.6px;font-weight:400;color:#5a5a5a;">8</div>
<div class="t" style="left:517.40px;width:40px;text-align:center;top:257.42px;font-size:5.6px;font-weight:400;color:#5a5a5a;">0</div>
<div class="t" style="left:544.30px;width:40px;text-align:center;top:257.42px;font-size:5.6px;font-weight:400;color:#5a5a5a;">2</div>
<div class="ab" style="left:202px;top:266.88px;width:217.20px;height:10.87px;background:#fff"></div>
<div class="ab" style="left:421.2px;top:266.88px;width:41.50px;height:10.87px;background:#fff"></div>
<div class="ab" style="left:464.7px;top:266.88px;width:31.70px;height:10.87px;background:#fff"></div>
<div class="ab" style="left:498.4px;top:266.88px;width:24.90px;height:10.87px;background:#fff"></div>
<div class="ab" style="left:525.3px;top:266.88px;width:24.30px;height:10.87px;background:#fff"></div>
<div class="ab" style="left:551.6px;top:266.88px;width:25.70px;height:10.87px;background:#fff"></div>
<svg class="ab" style="left:204.8px;top:269.00px" width="7" height="7" viewBox="0 0 7 7"><circle cx="3.25" cy="3.25" r="3.25" fill="#35b38a"/><path d="M1.8 3.25 H4.7 M3.25 1.8 V4.7" stroke="#c9eede" stroke-width="0.8"/></svg>
<div class="t" style="left:211.90px;top:270.29px;font-size:5.6px;font-weight:400;color:#5a5a5a;">Консистенция</div>
<div class="t" style="left:422.00px;width:40px;text-align:center;top:270.29px;font-size:5.6px;font-weight:400;color:#5a5a5a;">33 452</div>
<div class="t" style="left:460.40px;width:40px;text-align:center;top:270.29px;font-size:5.6px;font-weight:400;color:#5a5a5a;">26</div>
<div class="t" style="left:490.50px;width:40px;text-align:center;top:270.29px;font-size:5.6px;font-weight:400;color:#5a5a5a;">19</div>
<div class="t" style="left:517.40px;width:40px;text-align:center;top:270.29px;font-size:5.6px;font-weight:400;color:#5a5a5a;">0</div>
<div class="t" style="left:544.30px;width:40px;text-align:center;top:270.29px;font-size:5.6px;font-weight:400;color:#5a5a5a;">7</div>
<div class="ab" style="left:202px;top:279.75px;width:217.20px;height:10.87px;background:#fff"></div>
<div class="ab" style="left:421.2px;top:279.75px;width:41.50px;height:10.87px;background:#fff"></div>
<div class="ab" style="left:464.7px;top:279.75px;width:31.70px;height:10.87px;background:#fff"></div>
<div class="ab" style="left:498.4px;top:279.75px;width:24.90px;height:10.87px;background:#fff"></div>
<div class="ab" style="left:525.3px;top:279.75px;width:24.30px;height:10.87px;background:#fff"></div>
<div class="ab" style="left:551.6px;top:279.75px;width:25.70px;height:10.87px;background:#fff"></div>
<svg class="ab" style="left:204.8px;top:281.87px" width="7" height="7" viewBox="0 0 7 7"><circle cx="3.25" cy="3.25" r="3.25" fill="#35b38a"/><path d="M1.8 3.25 H4.7 M3.25 1.8 V4.7" stroke="#c9eede" stroke-width="0.8"/></svg>
<div class="t" style="left:211.90px;top:283.16px;font-size:5.6px;font-weight:400;color:#5a5a5a;">Объем</div>
<div class="t" style="left:422.00px;width:40px;text-align:center;top:283.16px;font-size:5.6px;font-weight:400;color:#5a5a5a;">30 680</div>
<div class="t" style="left:460.40px;width:40px;text-align:center;top:283.16px;font-size:5.6px;font-weight:400;color:#5a5a5a;">14</div>
<div class="t" style="left:490.50px;width:40px;text-align:center;top:283.16px;font-size:5.6px;font-weight:400;color:#5a5a5a;">6</div>
<div class="t" style="left:517.40px;width:40px;text-align:center;top:283.16px;font-size:5.6px;font-weight:400;color:#5a5a5a;">0</div>
<div class="t" style="left:544.30px;width:40px;text-align:center;top:283.16px;font-size:5.6px;font-weight:400;color:#5a5a5a;">8</div>
<div class="ab" style="left:202px;top:292.62px;width:217.20px;height:10.87px;background:#fff"></div>
<div class="ab" style="left:421.2px;top:292.62px;width:41.50px;height:10.87px;background:#fff"></div>
<div class="ab" style="left:464.7px;top:292.62px;width:31.70px;height:10.87px;background:#fff"></div>
<div class="ab" style="left:498.4px;top:292.62px;width:24.90px;height:10.87px;background:#fff"></div>
<div class="ab" style="left:525.3px;top:292.62px;width:24.30px;height:10.87px;background:#fff"></div>
<div class="ab" style="left:551.6px;top:292.62px;width:25.70px;height:10.87px;background:#fff"></div>
<svg class="ab" style="left:204.8px;top:294.74px" width="7" height="7" viewBox="0 0 7 7"><circle cx="3.25" cy="3.25" r="3.25" fill="#35b38a"/><path d="M1.8 3.25 H4.7 M3.25 1.8 V4.7" stroke="#c9eede" stroke-width="0.8"/></svg>
<div class="t" style="left:211.90px;top:296.03px;font-size:5.6px;font-weight:400;color:#5a5a5a;">Побочные эффекты</div>
<div class="t" style="left:422.00px;width:40px;text-align:center;top:296.03px;font-size:5.6px;font-weight:400;color:#5a5a5a;">26 896</div>
<div class="t" style="left:460.40px;width:40px;text-align:center;top:296.03px;font-size:5.6px;font-weight:400;color:#5a5a5a;">8</div>
<div class="t" style="left:490.50px;width:40px;text-align:center;top:296.03px;font-size:5.6px;font-weight:400;color:#5a5a5a;">8</div>
<div class="t" style="left:517.40px;width:40px;text-align:center;top:296.03px;font-size:5.6px;font-weight:400;color:#5a5a5a;">0</div>
<div class="t" style="left:544.30px;width:40px;text-align:center;top:296.03px;font-size:5.6px;font-weight:400;color:#5a5a5a;">0</div>
<div class="ab" style="left:202px;top:305.49px;width:217.20px;height:10.87px;background:#fff"></div>
<div class="ab" style="left:421.2px;top:305.49px;width:41.50px;height:10.87px;background:#fff"></div>
<div class="ab" style="left:464.7px;top:305.49px;width:31.70px;height:10.87px;background:#fff"></div>
<div class="ab" style="left:498.4px;top:305.49px;width:24.90px;height:10.87px;background:#fff"></div>
<div class="ab" style="left:525.3px;top:305.49px;width:24.30px;height:10.87px;background:#fff"></div>
<div class="ab" style="left:551.6px;top:305.49px;width:25.70px;height:10.87px;background:#fff"></div>
<svg class="ab" style="left:204.8px;top:307.61px" width="7" height="7" viewBox="0 0 7 7"><circle cx="3.25" cy="3.25" r="3.25" fill="#35b38a"/><path d="M1.8 3.25 H4.7 M3.25 1.8 V4.7" stroke="#c9eede" stroke-width="0.8"/></svg>
<div class="t" style="left:211.90px;top:308.90px;font-size:5.6px;font-weight:400;color:#5a5a5a;">Аллергия</div>
<div class="t" style="left:422.00px;width:40px;text-align:center;top:308.90px;font-size:5.6px;font-weight:400;color:#5a5a5a;">26 808</div>
<div class="t" style="left:460.40px;width:40px;text-align:center;top:308.90px;font-size:5.6px;font-weight:400;color:#5a5a5a;">11</div>
<div class="t" style="left:490.50px;width:40px;text-align:center;top:308.90px;font-size:5.6px;font-weight:400;color:#5a5a5a;">0</div>
<div class="t" style="left:517.40px;width:40px;text-align:center;top:308.90px;font-size:5.6px;font-weight:400;color:#5a5a5a;">0</div>
<div class="t" style="left:544.30px;width:40px;text-align:center;top:308.90px;font-size:5.6px;font-weight:400;color:#5a5a5a;">11</div>
<div class="ab" style="left:202px;top:318.36px;width:217.20px;height:10.87px;background:#fff"></div>
<div class="ab" style="left:421.2px;top:318.36px;width:41.50px;height:10.87px;background:#fff"></div>
<div class="ab" style="left:464.7px;top:318.36px;width:31.70px;height:10.87px;background:#fff"></div>
<div class="ab" style="left:498.4px;top:318.36px;width:24.90px;height:10.87px;background:#fff"></div>
<div class="ab" style="left:525.3px;top:318.36px;width:24.30px;height:10.87px;background:#fff"></div>
<div class="ab" style="left:551.6px;top:318.36px;width:25.70px;height:10.87px;background:#fff"></div>
<svg class="ab" style="left:204.8px;top:320.48px" width="7" height="7" viewBox="0 0 7 7"><circle cx="3.25" cy="3.25" r="3.25" fill="#35b38a"/><path d="M1.8 3.25 H4.7 M3.25 1.8 V4.7" stroke="#c9eede" stroke-width="0.8"/></svg>
<div class="t" style="left:211.90px;top:321.77px;font-size:5.6px;font-weight:400;color:#5a5a5a;">Брак</div>
<div class="t" style="left:422.00px;width:40px;text-align:center;top:321.77px;font-size:5.6px;font-weight:400;color:#5a5a5a;">24 989</div>
<div class="t" style="left:460.40px;width:40px;text-align:center;top:321.77px;font-size:5.6px;font-weight:400;color:#5a5a5a;">4</div>
<div class="t" style="left:490.50px;width:40px;text-align:center;top:321.77px;font-size:5.6px;font-weight:400;color:#5a5a5a;">0</div>
<div class="t" style="left:517.40px;width:40px;text-align:center;top:321.77px;font-size:5.6px;font-weight:400;color:#5a5a5a;">0</div>
<div class="t" style="left:544.30px;width:40px;text-align:center;top:321.77px;font-size:5.6px;font-weight:400;color:#5a5a5a;">4</div>
<div class="ab" style="left:202px;top:331.23px;width:217.20px;height:10.87px;background:#fff"></div>
<div class="ab" style="left:421.2px;top:331.23px;width:41.50px;height:10.87px;background:#fff"></div>
<div class="ab" style="left:464.7px;top:331.23px;width:31.70px;height:10.87px;background:#fff"></div>
<div class="ab" style="left:498.4px;top:331.23px;width:24.90px;height:10.87px;background:#fff"></div>
<div class="ab" style="left:525.3px;top:331.23px;width:24.30px;height:10.87px;background:#fff"></div>
<div class="ab" style="left:551.6px;top:331.23px;width:25.70px;height:10.87px;background:#fff"></div>
<svg class="ab" style="left:204.8px;top:333.35px" width="7" height="7" viewBox="0 0 7 7"><circle cx="3.25" cy="3.25" r="3.25" fill="#35b38a"/><path d="M1.8 3.25 H4.7 M3.25 1.8 V4.7" stroke="#c9eede" stroke-width="0.8"/></svg>
<div class="t" style="left:211.90px;top:334.64px;font-size:5.6px;font-weight:400;color:#5a5a5a;">Срыгивание</div>
<div class="t" style="left:422.00px;width:40px;text-align:center;top:334.64px;font-size:5.6px;font-weight:400;color:#5a5a5a;">17 534</div>
<div class="t" style="left:460.40px;width:40px;text-align:center;top:334.64px;font-size:5.6px;font-weight:400;color:#5a5a5a;">13</div>
<div class="t" style="left:490.50px;width:40px;text-align:center;top:334.64px;font-size:5.6px;font-weight:400;color:#5a5a5a;">5</div>
<div class="t" style="left:517.40px;width:40px;text-align:center;top:334.64px;font-size:5.6px;font-weight:400;color:#5a5a5a;">1</div>
<div class="t" style="left:544.30px;width:40px;text-align:center;top:334.64px;font-size:5.6px;font-weight:400;color:#5a5a5a;">7</div>
<div class="ab" style="left:202px;top:344.10px;width:217.20px;height:10.87px;background:#fff"></div>
<div class="ab" style="left:421.2px;top:344.10px;width:41.50px;height:10.87px;background:#fff"></div>
<div class="ab" style="left:464.7px;top:344.10px;width:31.70px;height:10.87px;background:#fff"></div>
<div class="ab" style="left:498.4px;top:344.10px;width:24.90px;height:10.87px;background:#fff"></div>
<div class="ab" style="left:525.3px;top:344.10px;width:24.30px;height:10.87px;background:#fff"></div>
<div class="ab" style="left:551.6px;top:344.10px;width:25.70px;height:10.87px;background:#fff"></div>
<svg class="ab" style="left:204.8px;top:346.22px" width="7" height="7" viewBox="0 0 7 7"><circle cx="3.25" cy="3.25" r="3.25" fill="#35b38a"/><path d="M1.8 3.25 H4.7 M3.25 1.8 V4.7" stroke="#c9eede" stroke-width="0.8"/></svg>
<div class="t" style="left:211.90px;top:347.51px;font-size:5.6px;font-weight:400;color:#5a5a5a;">Комочки</div>
<div class="t" style="left:422.00px;width:40px;text-align:center;top:347.51px;font-size:5.6px;font-weight:400;color:#5a5a5a;">17 122</div>
<div class="t" style="left:460.40px;width:40px;text-align:center;top:347.51px;font-size:5.6px;font-weight:400;color:#5a5a5a;">13</div>
<div class="t" style="left:490.50px;width:40px;text-align:center;top:347.51px;font-size:5.6px;font-weight:400;color:#5a5a5a;">12</div>
<div class="t" style="left:517.40px;width:40px;text-align:center;top:347.51px;font-size:5.6px;font-weight:400;color:#5a5a5a;">0</div>
<div class="t" style="left:544.30px;width:40px;text-align:center;top:347.51px;font-size:5.6px;font-weight:400;color:#5a5a5a;">1</div>
<div class="ab" style="left:202px;top:356.97px;width:217.20px;height:10.87px;background:#fff"></div>
<div class="ab" style="left:421.2px;top:356.97px;width:41.50px;height:10.87px;background:#fff"></div>
<div class="ab" style="left:464.7px;top:356.97px;width:31.70px;height:10.87px;background:#fff"></div>
<div class="ab" style="left:498.4px;top:356.97px;width:24.90px;height:10.87px;background:#fff"></div>
<div class="ab" style="left:525.3px;top:356.97px;width:24.30px;height:10.87px;background:#fff"></div>
<div class="ab" style="left:551.6px;top:356.97px;width:25.70px;height:10.87px;background:#fff"></div>
<svg class="ab" style="left:204.8px;top:359.09px" width="7" height="7" viewBox="0 0 7 7"><circle cx="3.25" cy="3.25" r="3.25" fill="#35b38a"/><path d="M1.8 3.25 H4.7 M3.25 1.8 V4.7" stroke="#c9eede" stroke-width="0.8"/></svg>
<div class="t" style="left:211.90px;top:360.38px;font-size:5.6px;font-weight:400;color:#5a5a5a;">Производитель</div>
<div class="t" style="left:422.00px;width:40px;text-align:center;top:360.38px;font-size:5.6px;font-weight:400;color:#5a5a5a;">9 783</div>
<div class="t" style="left:460.40px;width:40px;text-align:center;top:360.38px;font-size:5.6px;font-weight:400;color:#5a5a5a;">10</div>
<div class="t" style="left:490.50px;width:40px;text-align:center;top:360.38px;font-size:5.6px;font-weight:400;color:#5a5a5a;">6</div>
<div class="t" style="left:517.40px;width:40px;text-align:center;top:360.38px;font-size:5.6px;font-weight:400;color:#5a5a5a;">1</div>
<div class="t" style="left:544.30px;width:40px;text-align:center;top:360.38px;font-size:5.6px;font-weight:400;color:#5a5a5a;">3</div>
<div class="ab" style="left:202px;top:369.84px;width:217.20px;height:10.87px;background:#fff"></div>
<div class="ab" style="left:421.2px;top:369.84px;width:41.50px;height:10.87px;background:#fff"></div>
<div class="ab" style="left:464.7px;top:369.84px;width:31.70px;height:10.87px;background:#fff"></div>
<div class="ab" style="left:498.4px;top:369.84px;width:24.90px;height:10.87px;background:#fff"></div>
<div class="ab" style="left:525.3px;top:369.84px;width:24.30px;height:10.87px;background:#fff"></div>
<div class="ab" style="left:551.6px;top:369.84px;width:25.70px;height:10.87px;background:#fff"></div>
<svg class="ab" style="left:204.8px;top:371.96px" width="7" height="7" viewBox="0 0 7 7"><circle cx="3.25" cy="3.25" r="3.25" fill="#35b38a"/><path d="M1.8 3.25 H4.7 M3.25 1.8 V4.7" stroke="#c9eede" stroke-width="0.8"/></svg>
<div class="t" style="left:211.90px;top:373.25px;font-size:5.6px;font-weight:400;color:#5a5a5a;">Удобство приготовления</div>
<div class="t" style="left:422.00px;width:40px;text-align:center;top:373.25px;font-size:5.6px;font-weight:400;color:#5a5a5a;">9 122</div>
<div class="t" style="left:460.40px;width:40px;text-align:center;top:373.25px;font-size:5.6px;font-weight:400;color:#5a5a5a;">10</div>
<div class="t" style="left:490.50px;width:40px;text-align:center;top:373.25px;font-size:5.6px;font-weight:400;color:#5a5a5a;">10</div>
<div class="t" style="left:517.40px;width:40px;text-align:center;top:373.25px;font-size:5.6px;font-weight:400;color:#5a5a5a;">0</div>
<div class="t" style="left:544.30px;width:40px;text-align:center;top:373.25px;font-size:5.6px;font-weight:400;color:#5a5a5a;">0</div>
<div class="ab" style="left:202px;top:382.71px;width:217.20px;height:10.87px;background:#fff"></div>
<div class="ab" style="left:421.2px;top:382.71px;width:41.50px;height:10.87px;background:#fff"></div>
<div class="ab" style="left:464.7px;top:382.71px;width:31.70px;height:10.87px;background:#fff"></div>
<div class="ab" style="left:498.4px;top:382.71px;width:24.90px;height:10.87px;background:#fff"></div>
<div class="ab" style="left:525.3px;top:382.71px;width:24.30px;height:10.87px;background:#fff"></div>
<div class="ab" style="left:551.6px;top:382.71px;width:25.70px;height:10.87px;background:#fff"></div>
<svg class="ab" style="left:204.8px;top:384.83px" width="7" height="7" viewBox="0 0 7 7"><circle cx="3.25" cy="3.25" r="3.25" fill="#35b38a"/><path d="M1.8 3.25 H4.7 M3.25 1.8 V4.7" stroke="#c9eede" stroke-width="0.8"/></svg>
<div class="t" style="left:211.90px;top:386.12px;font-size:5.6px;font-weight:400;color:#5a5a5a;">Нормализация пищеварения</div>
<div class="t" style="left:422.00px;width:40px;text-align:center;top:386.12px;font-size:5.6px;font-weight:400;color:#5a5a5a;">8 137</div>
<div class="t" style="left:460.40px;width:40px;text-align:center;top:386.12px;font-size:5.6px;font-weight:400;color:#5a5a5a;">8</div>
<div class="t" style="left:490.50px;width:40px;text-align:center;top:386.12px;font-size:5.6px;font-weight:400;color:#5a5a5a;">8</div>
<div class="t" style="left:517.40px;width:40px;text-align:center;top:386.12px;font-size:5.6px;font-weight:400;color:#5a5a5a;">0</div>
<div class="t" style="left:544.30px;width:40px;text-align:center;top:386.12px;font-size:5.6px;font-weight:400;color:#5a5a5a;">0</div>
<div class="ab" style="left:202px;top:395.58px;width:217.20px;height:10.87px;background:#fff"></div>
<div class="ab" style="left:421.2px;top:395.58px;width:41.50px;height:10.87px;background:#fff"></div>
<div class="ab" style="left:464.7px;top:395.58px;width:31.70px;height:10.87px;background:#fff"></div>
<div class="ab" style="left:498.4px;top:395.58px;width:24.90px;height:10.87px;background:#fff"></div>
<div class="ab" style="left:525.3px;top:395.58px;width:24.30px;height:10.87px;background:#fff"></div>
<div class="ab" style="left:551.6px;top:395.58px;width:25.70px;height:10.87px;background:#fff"></div>
<svg class="ab" style="left:204.8px;top:397.70px" width="7" height="7" viewBox="0 0 7 7"><circle cx="3.25" cy="3.25" r="3.25" fill="#35b38a"/><path d="M1.8 3.25 H4.7 M3.25 1.8 V4.7" stroke="#c9eede" stroke-width="0.8"/></svg>
<div class="t" style="left:211.90px;top:398.99px;font-size:5.6px;font-weight:400;color:#5a5a5a;">Витамины</div>
<div class="t" style="left:422.00px;width:40px;text-align:center;top:398.99px;font-size:5.6px;font-weight:400;color:#5a5a5a;">4 146</div>
<div class="t" style="left:460.40px;width:40px;text-align:center;top:398.99px;font-size:5.6px;font-weight:400;color:#5a5a5a;">6</div>
<div class="t" style="left:490.50px;width:40px;text-align:center;top:398.99px;font-size:5.6px;font-weight:400;color:#5a5a5a;">6</div>
<div class="t" style="left:517.40px;width:40px;text-align:center;top:398.99px;font-size:5.6px;font-weight:400;color:#5a5a5a;">0</div>
<div class="t" style="left:544.30px;width:40px;text-align:center;top:398.99px;font-size:5.6px;font-weight:400;color:#5a5a5a;">0</div>
<div class="ab" style="left:202px;top:408.45px;width:217.20px;height:10.87px;background:#fff"></div>
<div class="ab" style="left:421.2px;top:408.45px;width:41.50px;height:10.87px;background:#fff"></div>
<div class="ab" style="left:464.7px;top:408.45px;width:31.70px;height:10.87px;background:#fff"></div>
<div class="ab" style="left:498.4px;top:408.45px;width:24.90px;height:10.87px;background:#fff"></div>
<div class="ab" style="left:525.3px;top:408.45px;width:24.30px;height:10.87px;background:#fff"></div>
<div class="ab" style="left:551.6px;top:408.45px;width:25.70px;height:10.87px;background:#fff"></div>
<svg class="ab" style="left:204.8px;top:410.57px" width="7" height="7" viewBox="0 0 7 7"><circle cx="3.25" cy="3.25" r="3.25" fill="#35b38a"/><path d="M1.8 3.25 H4.7 M3.25 1.8 V4.7" stroke="#c9eede" stroke-width="0.8"/></svg>
<div class="t" style="left:211.90px;top:411.86px;font-size:5.6px;font-weight:400;color:#5a5a5a;">Экономия времени</div>
<div class="t" style="left:422.00px;width:40px;text-align:center;top:411.86px;font-size:5.6px;font-weight:400;color:#5a5a5a;">4 146</div>
<div class="t" style="left:460.40px;width:40px;text-align:center;top:411.86px;font-size:5.6px;font-weight:400;color:#5a5a5a;">9</div>
<div class="t" style="left:490.50px;width:40px;text-align:center;top:411.86px;font-size:5.6px;font-weight:400;color:#5a5a5a;">9</div>
<div class="t" style="left:517.40px;width:40px;text-align:center;top:411.86px;font-size:5.6px;font-weight:400;color:#5a5a5a;">0</div>
<div class="t" style="left:544.30px;width:40px;text-align:center;top:411.86px;font-size:5.6px;font-weight:400;color:#5a5a5a;">0</div>
<div class="ab" style="left:202px;top:421.32px;width:217.20px;height:18.68px;background:#fff"></div>
<div class="ab" style="left:421.2px;top:421.32px;width:41.50px;height:18.68px;background:#fff"></div>
<div class="ab" style="left:464.7px;top:421.32px;width:31.70px;height:18.68px;background:#fff"></div>
<div class="ab" style="left:498.4px;top:421.32px;width:24.90px;height:18.68px;background:#fff"></div>
<div class="ab" style="left:525.3px;top:421.32px;width:24.30px;height:18.68px;background:#fff"></div>
<div class="ab" style="left:551.6px;top:421.32px;width:25.70px;height:18.68px;background:#fff"></div>
<div class="t" style="left:204.00px;top:424.90px;font-size:5.4px;font-weight:700;color:#222;">Всего</div>
<div class="t" style="left:422.00px;width:40px;text-align:center;top:424.90px;font-size:5.4px;font-weight:700;color:#222;">1 874 642</div>
<div class="t" style="left:460.40px;width:40px;text-align:center;top:424.90px;font-size:5.4px;font-weight:700;color:#222;">687</div>
<div class="t" style="left:490.50px;width:40px;text-align:center;top:424.90px;font-size:5.4px;font-weight:700;color:#222;">530</div>
<div class="t" style="left:517.40px;width:40px;text-align:center;top:424.90px;font-size:5.4px;font-weight:700;color:#222;">13</div>
<div class="t" style="left:544.30px;width:40px;text-align:center;top:424.90px;font-size:5.4px;font-weight:700;color:#222;">144</div>
<div class="t" style="transform:scaleX(0.9674);transform-origin:0 0;left:586.00px;top:43.99px;font-size:10.6px;font-weight:400;color:#524a68;">Самые негативные темы на 13.01.2023</div>
<svg class="ab" style="left:947px;top:43.2px" width="12" height="12" viewBox="0 0 12 12"><g opacity="0.85"><path d="M3.2 8.8 L8.8 3.2" stroke="#35b38a" stroke-width="0.9"/><path d="M6.9 2.3 L9.7 2.3 L9.7 5.1Z M2.3 6.9 L2.3 9.7 L5.1 9.7Z" fill="#35b38a"/></g></svg>
<div class="t" style="left:571.70px;width:30px;text-align:right;top:139.28px;font-size:5.2px;font-weight:400;color:#a3a6b8;">0%</div>
<div class="t" style="left:571.70px;width:30px;text-align:right;top:131.32px;font-size:5.2px;font-weight:400;color:#a3a6b8;">10%</div>
<div class="t" style="left:571.70px;width:30px;text-align:right;top:123.36px;font-size:5.2px;font-weight:400;color:#a3a6b8;">20%</div>
<div class="t" style="left:571.70px;width:30px;text-align:right;top:115.40px;font-size:5.2px;font-weight:400;color:#a3a6b8;">30%</div>
<div class="t" style="left:571.70px;width:30px;text-align:right;top:107.44px;font-size:5.2px;font-weight:400;color:#a3a6b8;">40%</div>
<div class="t" style="left:571.70px;width:30px;text-align:right;top:99.48px;font-size:5.2px;font-weight:400;color:#a3a6b8;">50%</div>
<div class="t" style="left:571.70px;width:30px;text-align:right;top:91.52px;font-size:5.2px;font-weight:400;color:#a3a6b8;">60%</div>
<div class="t" style="left:571.70px;width:30px;text-align:right;top:83.56px;font-size:5.2px;font-weight:400;color:#a3a6b8;">70%</div>
<div class="t" style="left:571.70px;width:30px;text-align:right;top:75.60px;font-size:5.2px;font-weight:400;color:#a3a6b8;">80%</div>
<div class="t" style="left:571.70px;width:30px;text-align:right;top:67.64px;font-size:5.2px;font-weight:400;color:#a3a6b8;">90%</div>
<div class="t" style="left:571.70px;width:30px;text-align:right;top:59.68px;font-size:5.2px;font-weight:400;color:#a3a6b8;">100%</div>
<div class="ab" style="left:607.10px;top:61.40px;width:25.5px;height:79.60px;background:#ab191a"></div>
<div class="xl" style="right:355.90px;top:144.00px;transform:rotate(-18deg)">Аллергия</div>
<div class="ab" style="left:642.90px;top:61.40px;width:25.5px;height:79.60px;background:#ab191a"></div>
<div class="xl" style="right:320.10px;top:144.00px;transform:rotate(-18deg)">Брак</div>
<div class="ab" style="left:678.70px;top:87.51px;width:25.5px;height:53.49px;background:#ab191a"></div>
<div class="xl" style="right:284.30px;top:144.00px;transform:rotate(-18deg)">Соблюдение...</div>
<div class="ab" style="left:714.50px;top:95.55px;width:25.5px;height:45.45px;background:#ab191a"></div>
<div class="xl" style="right:248.50px;top:144.00px;transform:rotate(-18deg)">Объем</div>
<div class="ab" style="left:750.30px;top:98.18px;width:25.5px;height:42.82px;background:#ab191a"></div>
<div class="xl" style="right:212.70px;top:144.00px;transform:rotate(-18deg)">Срыгивание</div>
<div class="ab" style="left:786.10px;top:109.16px;width:25.5px;height:31.84px;background:#ab191a"></div>
<div class="xl" style="right:176.90px;top:144.00px;transform:rotate(-18deg)">Доступност...</div>
<div class="ab" style="left:821.90px;top:111.15px;width:25.5px;height:29.85px;background:#ab191a"></div>
<div class="xl" style="right:141.10px;top:144.00px;transform:rotate(-18deg)">Запах</div>
<div class="ab" style="left:857.70px;top:113.14px;width:25.5px;height:27.86px;background:#ab191a"></div>
<div class="xl" style="right:105.30px;top:144.00px;transform:rotate(-18deg)">Колики</div>
<div class="ab" style="left:893.50px;top:115.13px;width:25.5px;height:25.87px;background:#ab191a"></div>
<div class="xl" style="right:69.50px;top:144.00px;transform:rotate(-18deg)">Отзывы</div>
<div class="ab" style="left:929.30px;top:117.12px;width:25.5px;height:23.88px;background:#ab191a"></div>
<div class="xl" style="right:33.70px;top:144.00px;transform:rotate(-18deg)">Производит...</div>
<div class="t" style="transform:scaleX(0.9663);transform-origin:0 0;left:586.00px;top:180.99px;font-size:10.6px;font-weight:400;color:#524a68;">Самые позитивные темы на 13.01.2023</div>
<svg class="ab" style="left:947px;top:179.8px" width="12" height="12" viewBox="0 0 12 12"><g opacity="0.85"><path d="M3.2 8.8 L8.8 3.2" stroke="#35b38a" stroke-width="0.9"/><path d="M6.9 2.3 L9.7 2.3 L9.7 5.1Z M2.3 6.9 L2.3 9.7 L5.1 9.7Z" fill="#35b38a"/></g></svg>
<div class="t" style="left:582.40px;width:30px;text-align:right;top:264.28px;font-size:5.2px;font-weight:400;color:#a3a6b8;">0%</div>
<div class="t" style="left:582.40px;width:30px;text-align:right;top:257.53px;font-size:5.2px;font-weight:400;color:#a3a6b8;">10%</div>
<div class="t" style="left:582.40px;width:30px;text-align:right;top:250.78px;font-size:5.2px;font-weight:400;color:#a3a6b8;">20%</div>
<div class="t" style="left:582.40px;width:30px;text-align:right;top:244.03px;font-size:5.2px;font-weight:400;color:#a3a6b8;">30%</div>
<div class="t" style="left:582.40px;width:30px;text-align:right;top:237.28px;font-size:5.2px;font-weight:400;color:#a3a6b8;">40%</div>
<div class="t" style="left:582.40px;width:30px;text-align:right;top:230.53px;font-size:5.2px;font-weight:400;color:#a3a6b8;">50%</div>
<div class="t" style="left:582.40px;width:30px;text-align:right;top:223.78px;font-size:5.2px;font-weight:400;color:#a3a6b8;">60%</div>
<div class="t" style="left:582.40px;width:30px;text-align:right;top:217.03px;font-size:5.2px;font-weight:400;color:#a3a6b8;">70%</div>
<div class="t" style="left:582.40px;width:30px;text-align:right;top:210.28px;font-size:5.2px;font-weight:400;color:#a3a6b8;">80%</div>
<div class="t" style="left:582.40px;width:30px;text-align:right;top:203.53px;font-size:5.2px;font-weight:400;color:#a3a6b8;">90%</div>
<div class="t" style="left:582.40px;width:30px;text-align:right;top:196.78px;font-size:5.2px;font-weight:400;color:#a3a6b8;">100%</div>
<div class="ab" style="left:615.40px;top:198.50px;width:12px;height:67.50px;background:#35b38a"></div>
<div class="xl" style="right:352.60px;top:270.60px;transform:rotate(-33deg)">Рекомендац...</div>
<div class="ab" style="left:631.91px;top:198.50px;width:12px;height:67.50px;background:#35b38a"></div>
<div class="xl" style="right:336.09px;top:270.60px;transform:rotate(-33deg)">Побочные э...</div>
<div class="ab" style="left:648.42px;top:198.50px;width:12px;height:67.50px;background:#35b38a"></div>
<div class="xl" style="right:319.58px;top:270.60px;transform:rotate(-33deg)">Удобство п...</div>
<div class="ab" style="left:664.93px;top:198.50px;width:12px;height:67.50px;background:#35b38a"></div>
<div class="xl" style="right:303.07px;top:270.60px;transform:rotate(-33deg)">Нормализац...</div>
<div class="ab" style="left:681.44px;top:198.50px;width:12px;height:67.50px;background:#35b38a"></div>
<div class="xl" style="right:286.56px;top:270.60px;transform:rotate(-33deg)">Витамины</div>
<div class="ab" style="left:697.95px;top:198.50px;width:12px;height:67.50px;background:#35b38a"></div>
<div class="xl" style="right:270.05px;top:270.60px;transform:rotate(-33deg)">Экономия в...</div>
<div class="ab" style="left:714.46px;top:198.50px;width:12px;height:67.50px;background:#35b38a"></div>
<div class="xl" style="right:253.54px;top:270.60px;transform:rotate(-33deg)">Текстура</div>
<div class="ab" style="left:730.97px;top:198.50px;width:12px;height:67.50px;background:#35b38a"></div>
<div class="xl" style="right:237.03px;top:270.60px;transform:rotate(-33deg)">Мерная лож...</div>
<div class="ab" style="left:747.48px;top:198.50px;width:12px;height:67.50px;background:#35b38a"></div>
<div class="xl" style="right:220.52px;top:270.60px;transform:rotate(-33deg)">Влияние на...</div>
<div class="ab" style="left:763.99px;top:198.50px;width:12px;height:67.50px;background:#35b38a"></div>
<div class="xl" style="right:204.01px;top:270.60px;transform:rotate(-33deg)">Экономичны...</div>
<div class="ab" style="left:780.50px;top:198.50px;width:12px;height:67.50px;background:#35b38a"></div>
<div class="xl" style="right:187.50px;top:270.60px;transform:rotate(-33deg)">Надежность...</div>
<div class="ab" style="left:797.01px;top:198.50px;width:12px;height:67.50px;background:#35b38a"></div>
<div class="xl" style="right:170.99px;top:270.60px;transform:rotate(-33deg)">Срок годно...</div>
<div class="ab" style="left:813.52px;top:198.50px;width:12px;height:67.50px;background:#35b38a"></div>
<div class="xl" style="right:154.48px;top:270.60px;transform:rotate(-33deg)">Усваиваемо...</div>
<div class="ab" style="left:830.03px;top:201.44px;width:12px;height:64.56px;background:#35b38a"></div>
<div class="xl" style="right:137.97px;top:270.60px;transform:rotate(-33deg)">Набор веса</div>
<div class="ab" style="left:846.54px;top:202.48px;width:12px;height:63.52px;background:#35b38a"></div>
<div class="xl" style="right:121.46px;top:270.60px;transform:rotate(-33deg)">Гипоаллерг...</div>
<div class="ab" style="left:863.05px;top:203.70px;width:12px;height:62.30px;background:#35b38a"></div>
<div class="xl" style="right:104.95px;top:270.60px;transform:rotate(-33deg)">Комочки</div>
<div class="ab" style="left:879.56px;top:204.57px;width:12px;height:61.42px;background:#35b38a"></div>
<div class="xl" style="right:88.44px;top:270.60px;transform:rotate(-33deg)">Состав</div>
<div class="ab" style="left:896.07px;top:207.95px;width:12px;height:58.05px;background:#35b38a"></div>
<div class="xl" style="right:71.93px;top:270.60px;transform:rotate(-33deg)">Ассортимен...</div>
<div class="ab" style="left:912.58px;top:210.78px;width:12px;height:55.22px;background:#35b38a"></div>
<div class="xl" style="right:55.42px;top:270.60px;transform:rotate(-33deg)">Качество п...</div>
<div class="ab" style="left:929.09px;top:212.34px;width:12px;height:53.66px;background:#35b38a"></div>
<div class="xl" style="right:38.91px;top:270.60px;transform:rotate(-33deg)">Упаковка/к...</div>
<div class="ab" style="left:945.60px;top:212.00px;width:12px;height:54.00px;background:#35b38a"></div>
<div class="xl" style="right:22.40px;top:270.60px;transform:rotate(-33deg)">Скидки / А...</div>
<div class="t" style="transform:scaleX(0.9579);transform-origin:0 0;left:586.00px;top:317.79px;font-size:10.6px;font-weight:400;color:#524a68;">Охватные темы на 13.01.2023</div>
<svg class="ab" style="left:946.8px;top:317.3px" width="12" height="12" viewBox="0 0 12 12"><g opacity="0.85"><path d="M3.2 8.8 L8.8 3.2" stroke="#35b38a" stroke-width="0.9"/><path d="M6.9 2.3 L9.7 2.3 L9.7 5.1Z M2.3 6.9 L2.3 9.7 L5.1 9.7Z" fill="#35b38a"/></g></svg>
<div class="ab" style="left:802.4px;top:337.6px;width:5.8px;height:5.8px;border-radius:50%;border:1.9px solid #f2a20a;background:#f6e7c8"></div>
<div class="t" style="transform:scaleX(0.9096);transform-origin:0 0;left:809.80px;top:336.85px;font-size:7px;font-weight:400;color:#777;">Трафик</div>
<div class="ab" style="left:836.6px;top:338.2px;width:4.6px;height:4.6px;border-radius:50%;background:#35b38a"></div>
<div class="t" style="transform:scaleX(0.9017);transform-origin:0 0;left:843.50px;top:336.85px;font-size:7px;font-weight:400;color:#777;">Позитивные</div>
<div class="ab" style="left:884.4px;top:338.2px;width:4.6px;height:4.6px;border-radius:50%;background:#a9a9c6"></div>
<div class="t" style="transform:scaleX(0.9127);transform-origin:0 0;left:891.00px;top:336.85px;font-size:7px;font-weight:400;color:#777;">Нейтральные</div>
<div class="ab" style="left:935.8px;top:338.2px;width:4.6px;height:4.6px;border-radius:50%;background:#ab191a"></div>
<div class="ab" style="left:0;top:0;width:962px;height:433px;overflow:hidden">
<div class="t" style="transform:scaleX(1.0073);transform-origin:0 0;left:943.00px;top:336.85px;font-size:7px;font-weight:400;color:#777;">Негативные</div>
<div class="t" style="left:591.00px;width:20px;text-align:right;top:399.18px;font-size:5.2px;font-weight:400;color:#a3a6b8;">0</div>
<div class="t" style="left:591.00px;width:20px;text-align:right;top:392.66px;font-size:5.2px;font-weight:400;color:#a3a6b8;">10</div>
<div class="t" style="left:591.00px;width:20px;text-align:right;top:386.14px;font-size:5.2px;font-weight:400;color:#a3a6b8;">20</div>
<div class="t" style="left:591.00px;width:20px;text-align:right;top:379.62px;font-size:5.2px;font-weight:400;color:#a3a6b8;">30</div>
<div class="t" style="left:591.00px;width:20px;text-align:right;top:373.10px;font-size:5.2px;font-weight:400;color:#a3a6b8;">40</div>
<div class="t" style="left:591.00px;width:20px;text-align:right;top:366.59px;font-size:5.2px;font-weight:400;color:#a3a6b8;">50</div>
<div class="t" style="left:591.00px;width:20px;text-align:right;top:360.07px;font-size:5.2px;font-weight:400;color:#a3a6b8;">60</div>
<div class="t" style="left:591.00px;width:20px;text-align:right;top:353.55px;font-size:5.2px;font-weight:400;color:#a3a6b8;">70</div>
<div class="t" style="left:591.00px;width:20px;text-align:right;top:347.03px;font-size:5.2px;font-weight:400;color:#a3a6b8;">80</div>
<div class="ab" style="left:612.65px;top:364.39px;width:10.7px;height:36.50px;background:#35b38a"></div>
<div class="ab" style="left:612.65px;top:363.09px;width:10.7px;height:1.30px;background:#a9a9c6"></div>
<div class="ab" style="left:612.65px;top:352.66px;width:10.7px;height:10.43px;background:#ab191a"></div>
<div class="xl" style="right:347.85px;top:406.70px;transform:rotate(-38deg)">Вкусовые к...</div>
<div class="ab" style="left:627.49px;top:382.00px;width:10.7px;height:18.90px;background:#35b38a"></div>
<div class="ab" style="left:627.49px;top:380.69px;width:10.7px;height:1.30px;background:#a9a9c6"></div>
<div class="ab" style="left:627.49px;top:373.52px;width:10.7px;height:7.17px;background:#ab191a"></div>
<div class="xl" style="right:333.01px;top:406.70px;transform:rotate(-38deg)">Влияние на...</div>
<div class="ab" style="left:642.33px;top:374.17px;width:10.7px;height:26.73px;background:#35b38a"></div>
<div class="ab" style="left:642.33px;top:365.70px;width:10.7px;height:8.47px;background:#ab191a"></div>
<div class="xl" style="right:318.17px;top:406.70px;transform:rotate(-38deg)">Цена</div>
<div class="ab" style="left:657.17px;top:361.14px;width:10.7px;height:39.76px;background:#35b38a"></div>
<div class="ab" style="left:657.17px;top:360.48px;width:10.7px;height:0.65px;background:#a9a9c6"></div>
<div class="ab" style="left:657.17px;top:357.22px;width:10.7px;height:3.26px;background:#ab191a"></div>
<div class="xl" style="right:303.33px;top:406.70px;transform:rotate(-38deg)">Состав</div>
<div class="ab" style="left:672.01px;top:369.61px;width:10.7px;height:31.29px;background:#35b38a"></div>
<div class="ab" style="left:672.01px;top:368.96px;width:10.7px;height:0.65px;background:#a9a9c6"></div>
<div class="ab" style="left:672.01px;top:367.65px;width:10.7px;height:1.30px;background:#ab191a"></div>
<div class="xl" style="right:288.49px;top:406.70px;transform:rotate(-38deg)">Гипоаллерг...</div>
<div class="ab" style="left:686.85px;top:395.03px;width:10.7px;height:5.87px;background:#35b38a"></div>
<div class="ab" style="left:686.85px;top:391.12px;width:10.7px;height:3.91px;background:#ab191a"></div>
<div class="xl" style="right:273.65px;top:406.70px;transform:rotate(-38deg)">Доступност...</div>
<div class="ab" style="left:701.69px;top:388.51px;width:10.7px;height:12.39px;background:#35b38a"></div>
<div class="ab" style="left:701.69px;top:387.86px;width:10.7px;height:0.65px;background:#a9a9c6"></div>
<div class="ab" style="left:701.69px;top:380.04px;width:10.7px;height:7.82px;background:#ab191a"></div>
<div class="xl" style="right:258.81px;top:406.70px;transform:rotate(-38deg)">Запах</div>
<div class="ab" style="left:716.53px;top:383.30px;width:10.7px;height:17.60px;background:#35b38a"></div>
<div class="ab" style="left:716.53px;top:379.39px;width:10.7px;height:3.91px;background:#ab191a"></div>
<div class="xl" style="right:243.97px;top:406.70px;transform:rotate(-38deg)">Качество п...</div>
<div class="ab" style="left:731.37px;top:388.51px;width:10.7px;height:12.39px;background:#35b38a"></div>
<div class="ab" style="left:731.37px;top:387.21px;width:10.7px;height:1.30px;background:#a9a9c6"></div>
<div class="ab" style="left:731.37px;top:385.25px;width:10.7px;height:1.96px;background:#ab191a"></div>
<div class="xl" style="right:229.13px;top:406.70px;transform:rotate(-38deg)">Питательно...</div>
<div class="ab" style="left:746.21px;top:389.17px;width:10.7px;height:11.73px;background:#35b38a"></div>
<div class="ab" style="left:746.21px;top:385.91px;width:10.7px;height:3.26px;background:#ab191a"></div>
<div class="xl" style="right:214.29px;top:406.70px;transform:rotate(-38deg)">Растворяем...</div>
<div class="ab" style="left:761.05px;top:378.08px;width:10.7px;height:22.82px;background:#35b38a"></div>
<div class="ab" style="left:761.05px;top:372.22px;width:10.7px;height:5.87px;background:#ab191a"></div>
<div class="xl" style="right:199.45px;top:406.70px;transform:rotate(-38deg)">Упаковка/к...</div>
<div class="ab" style="left:775.89px;top:392.43px;width:10.7px;height:8.47px;background:#35b38a"></div>
<div class="ab" style="left:775.89px;top:387.86px;width:10.7px;height:4.56px;background:#ab191a"></div>
<div class="xl" style="right:184.61px;top:406.70px;transform:rotate(-38deg)">Колики</div>
<div class="ab" style="left:790.73px;top:386.56px;width:10.7px;height:14.34px;background:#35b38a"></div>
<div class="ab" style="left:790.73px;top:385.91px;width:10.7px;height:0.65px;background:#ab191a"></div>
<div class="xl" style="right:169.77px;top:406.70px;transform:rotate(-38deg)">Набор веса</div>
<div class="ab" style="left:805.57px;top:393.73px;width:10.7px;height:7.17px;background:#35b38a"></div>
<div class="xl" style="right:154.93px;top:406.70px;transform:rotate(-38deg)">Рекомендац...</div>
<div class="ab" style="left:820.41px;top:395.69px;width:10.7px;height:5.21px;background:#35b38a"></div>
<div class="ab" style="left:820.41px;top:394.38px;width:10.7px;height:1.30px;background:#ab191a"></div>
<div class="xl" style="right:140.09px;top:406.70px;transform:rotate(-38deg)">Скидки / А...</div>
<div class="ab" style="left:835.25px;top:388.51px;width:10.7px;height:12.39px;background:#35b38a"></div>
<div class="ab" style="left:835.25px;top:383.95px;width:10.7px;height:4.56px;background:#ab191a"></div>
<div class="xl" style="right:125.25px;top:406.70px;transform:rotate(-38deg)">Консистенц...</div>
<div class="ab" style="left:850.09px;top:396.99px;width:10.7px;height:3.91px;background:#35b38a"></div>
<div class="ab" style="left:850.09px;top:391.77px;width:10.7px;height:5.21px;background:#ab191a"></div>
<div class="xl" style="right:110.41px;top:406.70px;transform:rotate(-38deg)">Объем</div>
<div class="ab" style="left:864.93px;top:395.69px;width:10.7px;height:5.21px;background:#35b38a"></div>
<div class="xl" style="right:95.57px;top:406.70px;transform:rotate(-38deg)">Побочные э...</div>
<div class="ab" style="left:879.77px;top:393.73px;width:10.7px;height:7.17px;background:#ab191a"></div>
<div class="xl" style="right:80.73px;top:406.70px;transform:rotate(-38deg)">Аллергия</div>
<div class="ab" style="left:894.61px;top:398.29px;width:10.7px;height:2.61px;background:#ab191a"></div>
<div class="xl" style="right:65.89px;top:406.70px;transform:rotate(-38deg)">Брак</div>
<div class="ab" style="left:909.45px;top:397.64px;width:10.7px;height:3.26px;background:#35b38a"></div>
<div class="ab" style="left:909.45px;top:396.99px;width:10.7px;height:0.65px;background:#a9a9c6"></div>
<div class="ab" style="left:909.45px;top:392.43px;width:10.7px;height:4.56px;background:#ab191a"></div>
<div class="xl" style="right:51.05px;top:406.70px;transform:rotate(-38deg)">Срыгивание</div>
<div class="ab" style="left:924.29px;top:393.08px;width:10.7px;height:7.82px;background:#35b38a"></div>
<div class="ab" style="left:924.29px;top:392.43px;width:10.7px;height:0.65px;background:#ab191a"></div>
<div class="xl" style="right:36.21px;top:406.70px;transform:rotate(-38deg)">Комочки</div>
<div class="ab" style="left:939.13px;top:396.99px;width:10.7px;height:3.91px;background:#35b38a"></div>
<div class="ab" style="left:939.13px;top:396.34px;width:10.7px;height:0.65px;background:#a9a9c6"></div>
<div class="ab" style="left:939.13px;top:394.38px;width:10.7px;height:1.96px;background:#ab191a"></div>
<div class="xl" style="right:21.37px;top:406.70px;transform:rotate(-38deg)">Производит...</div>
<div class="ab" style="left:953.97px;top:394.38px;width:10.7px;height:6.52px;background:#35b38a"></div>
<div class="xl" style="right:6.53px;top:406.70px;transform:rotate(-38deg)">Удобство п...</div>
<div class="ab" style="left:968.81px;top:395.69px;width:10.7px;height:5.21px;background:#35b38a"></div>
<div class="xl" style="right:-8.31px;top:406.70px;transform:rotate(-38deg)">Нормализац...</div>
<svg class="ab" style="left:0;top:0" width="972" height="433"><path d="M618.00 349.07 C620.97 349.49 626.90 349.62 632.84 351.19 C638.78 352.75 641.74 355.30 647.68 356.91 C653.62 358.52 656.58 358.71 662.52 359.23 C668.46 359.75 671.42 356.80 677.36 359.50 C683.30 362.21 686.26 369.34 692.20 372.77 C698.14 376.21 701.10 375.74 707.04 376.66 C712.98 377.59 715.94 377.17 721.88 377.40 C727.82 377.62 730.78 377.62 736.72 377.80 C742.66 377.99 745.62 377.53 751.56 378.32 C757.50 379.10 760.46 380.53 766.40 381.72 C772.34 382.90 775.30 383.64 781.24 384.25 C787.18 384.86 790.14 384.41 796.08 384.75 C802.02 385.10 804.98 385.28 810.92 385.96 C816.86 386.65 819.82 386.93 825.76 388.17 C831.70 389.41 834.66 391.23 840.60 392.18 C846.54 393.12 849.50 392.56 855.44 392.90 C861.38 393.24 864.34 393.68 870.28 393.89 C876.22 394.09 879.18 393.81 885.12 393.91 C891.06 394.01 894.02 393.90 899.96 394.38 C905.90 394.87 908.86 395.92 914.80 396.33 C920.74 396.74 923.70 396.03 929.64 396.44 C935.58 396.84 938.54 397.93 944.48 398.35 C950.42 398.77 953.38 398.44 959.32 398.52 C965.26 398.61 971.19 398.73 974.16 398.78" stroke="#f2a20a" stroke-width="1.5" fill="none"/><circle cx="618.00" cy="349.07" r="1.5" fill="#f2a20a"/><circle cx="632.84" cy="351.19" r="1.5" fill="#f2a20a"/><circle cx="647.68" cy="356.91" r="1.5" fill="#f2a20a"/><circle cx="662.52" cy="359.23" r="1.5" fill="#f2a20a"/><circle cx="677.36" cy="359.50" r="1.5" fill="#f2a20a"/><circle cx="692.20" cy="372.77" r="1.5" fill="#f2a20a"/><circle cx="707.04" cy="376.66" r="1.5" fill="#f2a20a"/><circle cx="721.88" cy="377.40" r="1.5" fill="#f2a20a"/><circle cx="736.72" cy="377.80" r="1.5" fill="#f2a20a"/><circle cx="751.56" cy="378.32" r="1.5" fill="#f2a20a"/><circle cx="766.40" cy="381.72" r="1.5" fill="#f2a20a"/><circle cx="781.24" cy="384.25" r="1.5" fill="#f2a20a"/><circle cx="796.08" cy="384.75" r="1.5" fill="#f2a20a"/><circle cx="810.92" cy="385.96" r="1.5" fill="#f2a20a"/><circle cx="825.76" cy="388.17" r="1.5" fill="#f2a20a"/><circle cx="840.60" cy="392.18" r="1.5" fill="#f2a20a"/><circle cx="855.44" cy="392.90" r="1.5" fill="#f2a20a"/><circle cx="870.28" cy="393.89" r="1.5" fill="#f2a20a"/><circle cx="885.12" cy="393.91" r="1.5" fill="#f2a20a"/><circle cx="899.96" cy="394.38" r="1.5" fill="#f2a20a"/><circle cx="914.80" cy="396.33" r="1.5" fill="#f2a20a"/><circle cx="929.64" cy="396.44" r="1.5" fill="#f2a20a"/><circle cx="944.48" cy="398.35" r="1.5" fill="#f2a20a"/><circle cx="959.32" cy="398.52" r="1.5" fill="#f2a20a"/><circle cx="974.16" cy="398.78" r="1.5" fill="#f2a20a"/></svg>
</div>
</body></html>
